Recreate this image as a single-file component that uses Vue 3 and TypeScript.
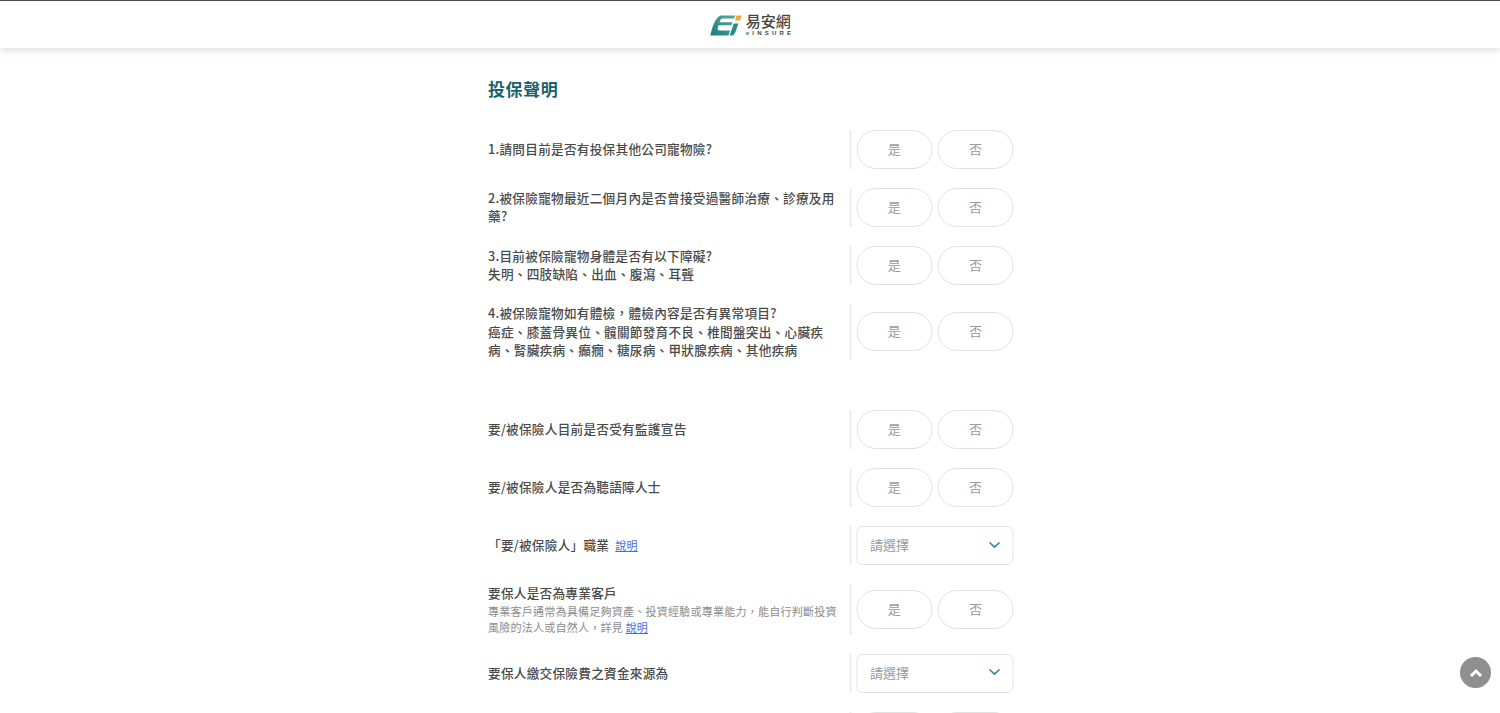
<script setup lang="ts">
type Row = {
  lines: string[]
  kind: 'yesno' | 'select'
  link?: string
  note?: string
  gap?: boolean
}

const rows: Row[] = [
  { lines: ['1.請問目前是否有投保其他公司寵物險?'], kind: 'yesno' },
  { lines: ['2.被保險寵物最近二個月內是否曾接受過醫師治療、診療及用藥?'], kind: 'yesno' },
  { lines: ['3.目前被保險寵物身體是否有以下障礙?', '失明、四肢缺陷、出血、腹瀉、耳聾'], kind: 'yesno' },
  {
    lines: ['4.被保險寵物如有體檢\uFF0C體檢內容是否有異常項目?', '癌症、膝蓋骨異位、髖關節發育不良、椎間盤突出、心臟疾病、腎臟疾病、癲癇、糖尿病、甲狀腺疾病、其他疾病'],
    kind: 'yesno',
    gap: true
  },
  { lines: ['要/被保險人目前是否受有監護宣告'], kind: 'yesno' },
  { lines: ['要/被保險人是否為聽語障人士'], kind: 'yesno' },
  { lines: ['「要/被保險人」職業'], kind: 'select', link: '說明' },
  {
    lines: ['要保人是否為專業客戶'],
    kind: 'yesno',
    note: '專業客戶通常為具備足夠資產、投資經驗或專業能力\uFF0C能自行判斷投資風險的法人或自然人\uFF0C詳見'
  },
  { lines: ['要保人繳交保險費之資金來源為'], kind: 'select' },
  { lines: [''], kind: 'yesno' }
]
</script>

<template>
  <header class="topbar">
    <div class="logo">
      <svg class="mark" width="32" height="21" viewBox="0 0 32 21">
        <defs>
          <linearGradient id="markFill" x1="0" y1="1" x2="1" y2="0">
            <stop offset="0" stop-color="#1c7a82" />
            <stop offset="1" stop-color="#58ab9f" />
          </linearGradient>
        </defs>
        <path d="M10 0.5H25.5L24.2 3.6H13.2C11.6 3.6 10.8 4.2 10.2 5.6L9.6 7.2H22.6L21.5 10.2H8.6L7.8 12.6C7.2 14.6 8 15.6 10 15.6H20.2L18.4 20.5H0.3C2 13 4.2 4.5 10 0.5Z" fill="url(#markFill)" />
        <path d="M23.8 8.5H28.4L25.3 17.4C24.6 19.4 23.2 20.5 21 20.5H19.6Z" fill="#2b8b8f" />
        <path d="M26.6 0.5H31.6L30.2 5.4H25Z" fill="#efa92f" />
      </svg>
      <div class="brand">
        <span class="brand-name">易安網</span>
        <span class="brand-sub"><i>e</i>INSURE</span>
      </div>
    </div>
  </header>

  <main class="page">
    <h1 class="title">投保聲明</h1>
    <section class="form">
      <div v-for="(row, idx) in rows" :key="idx" class="row" :class="{ spaced: row.gap }">
        <div class="question" :class="{ 'has-note': row.note }">
          <div v-for="line in row.lines" :key="line">
            {{ line }}
            <a v-if="row.link" class="link" href="#">{{ row.link }}</a>
          </div>
          <div v-if="row.note" class="note">
            {{ row.note }} <a class="link note-link" href="#">說明</a>
          </div>
        </div>
        <div class="answer">
          <template v-if="row.kind === 'yesno'">
            <button class="pill">是</button>
            <button class="pill">否</button>
          </template>
          <div v-else class="select">
            <span>請選擇</span>
            <svg width="12" height="8" viewBox="0 0 12 8">
              <polyline points="1 1.5, 6 6.2, 11 1.5" />
            </svg>
          </div>
        </div>
      </div>
    </section>
  </main>

  <button class="to-top" aria-label="top">
    <svg width="14" height="10" viewBox="0 0 14 10">
      <polyline points="2 8, 7 3, 12 8" />
    </svg>
  </button>
</template>

<style>
html,
body {
  height: 713px;
  overflow: hidden;
  background: #fff;
}
</style>

<style scoped>
.topbar {
  height: 47px;
  border-top: 1px solid #4a4a4a;
  background: #fff;
  box-shadow: 0 2px 8px rgba(0, 0, 0, 0.14);
  display: flex;
  justify-content: center;
  align-items: center;
  position: relative;
}
.logo {
  display: flex;
  align-items: center;
  gap: 4px;
  margin-left: 1.5px;
  margin-top: 2px;
}
.brand {
  display: flex;
  flex-direction: column;
  width: 46px;
  margin-top: -2px;
  font-family: "Noto Sans CJK TC", sans-serif;
  color: #444;
}
.brand-name {
  font-size: 15px;
  line-height: 15px;
  font-weight: 500;
}
.brand-sub {
  margin-top: 2px;
  font-family: "Liberation Sans", sans-serif;
  font-size: 6px;
  line-height: 7px;
  font-weight: 700;
  letter-spacing: 3.2px;
  white-space: nowrap;
}
.brand-sub i {
  color: #2d8f92;
}
.page {
  width: 525px;
  margin: 0 auto;
  transform: translateX(0.5px);
  font-family: "Noto Sans CJK TC", sans-serif;
  color: #4a4a4a;
}
.title {
  margin: 0;
  padding-top: 28px;
  height: 54px;
  font-size: 17px;
  line-height: 26px;
  font-weight: 700;
  letter-spacing: 0.6px;
  color: #17626b;
}
.form {
  display: flex;
  flex-direction: column;
  gap: 19px;
}
.row {
  display: grid;
  grid-template-columns: 361px 2px 1fr;
  min-height: 39px;
}
.row.spaced {
  margin-bottom: 30.75px;
}
.row.spaced .answer {
  padding-bottom: 1px;
}
.question {
  grid-column: 1;
  align-self: center;
  font-size: 12.65px;
  font-weight: 500;
  line-height: 18.75px;
  letter-spacing: 0.25px;
  padding-right: 10px;
  margin: -0.25px 0 0.25px;
}
.question.has-note {
  margin: -0.25px 0 -0.75px;
}
.note {
  font-size: 11.05px;
  font-weight: 400;
  line-height: 16.6px;
  color: #8c8c8c;
  letter-spacing: 0.2px;
}
.link {
  color: #3f6ee8;
  margin-left: 3px;
  font-size: 11px;
  font-weight: 400;
}
.note-link {
  margin-left: 0;
}
.answer {
  grid-column: 3;
  display: flex;
  align-items: center;
  gap: 5.5px;
  padding-left: 5.5px;
  position: relative;
}
.answer::before {
  content: "";
  position: absolute;
  left: -2px;
  top: 0;
  bottom: 0;
  width: 2px;
  background: #ececec;
}
.pill {
  width: 75.75px;
  height: 39px;
  border: 1px solid #e2e2e2;
  border-radius: 20px;
  background: #fff;
  color: #9a9a9a;
  font-family: inherit;
  font-size: 13px;
  padding: 0 0 2px;
}
.select {
  width: 157px;
  height: 39px;
  box-sizing: border-box;
  border: 1px solid #e2e2e2;
  border-radius: 6px;
  display: flex;
  align-items: center;
  justify-content: space-between;
  padding: 0 12px 2px 12.5px;
  color: #9a9a9a;
  font-size: 13px;
}
.select svg polyline {
  fill: none;
  stroke: #2d8a92;
  stroke-width: 1.6;
}
.to-top {
  position: fixed;
  right: 9px;
  bottom: 25px;
  width: 31px;
  height: 31px;
  border: none;
  border-radius: 50%;
  background: #8f8f8f;
  padding: 0;
  display: flex;
  justify-content: center;
  align-items: center;
}
.to-top polyline {
  fill: none;
  stroke: #fff;
  stroke-width: 3;
}
</style>
